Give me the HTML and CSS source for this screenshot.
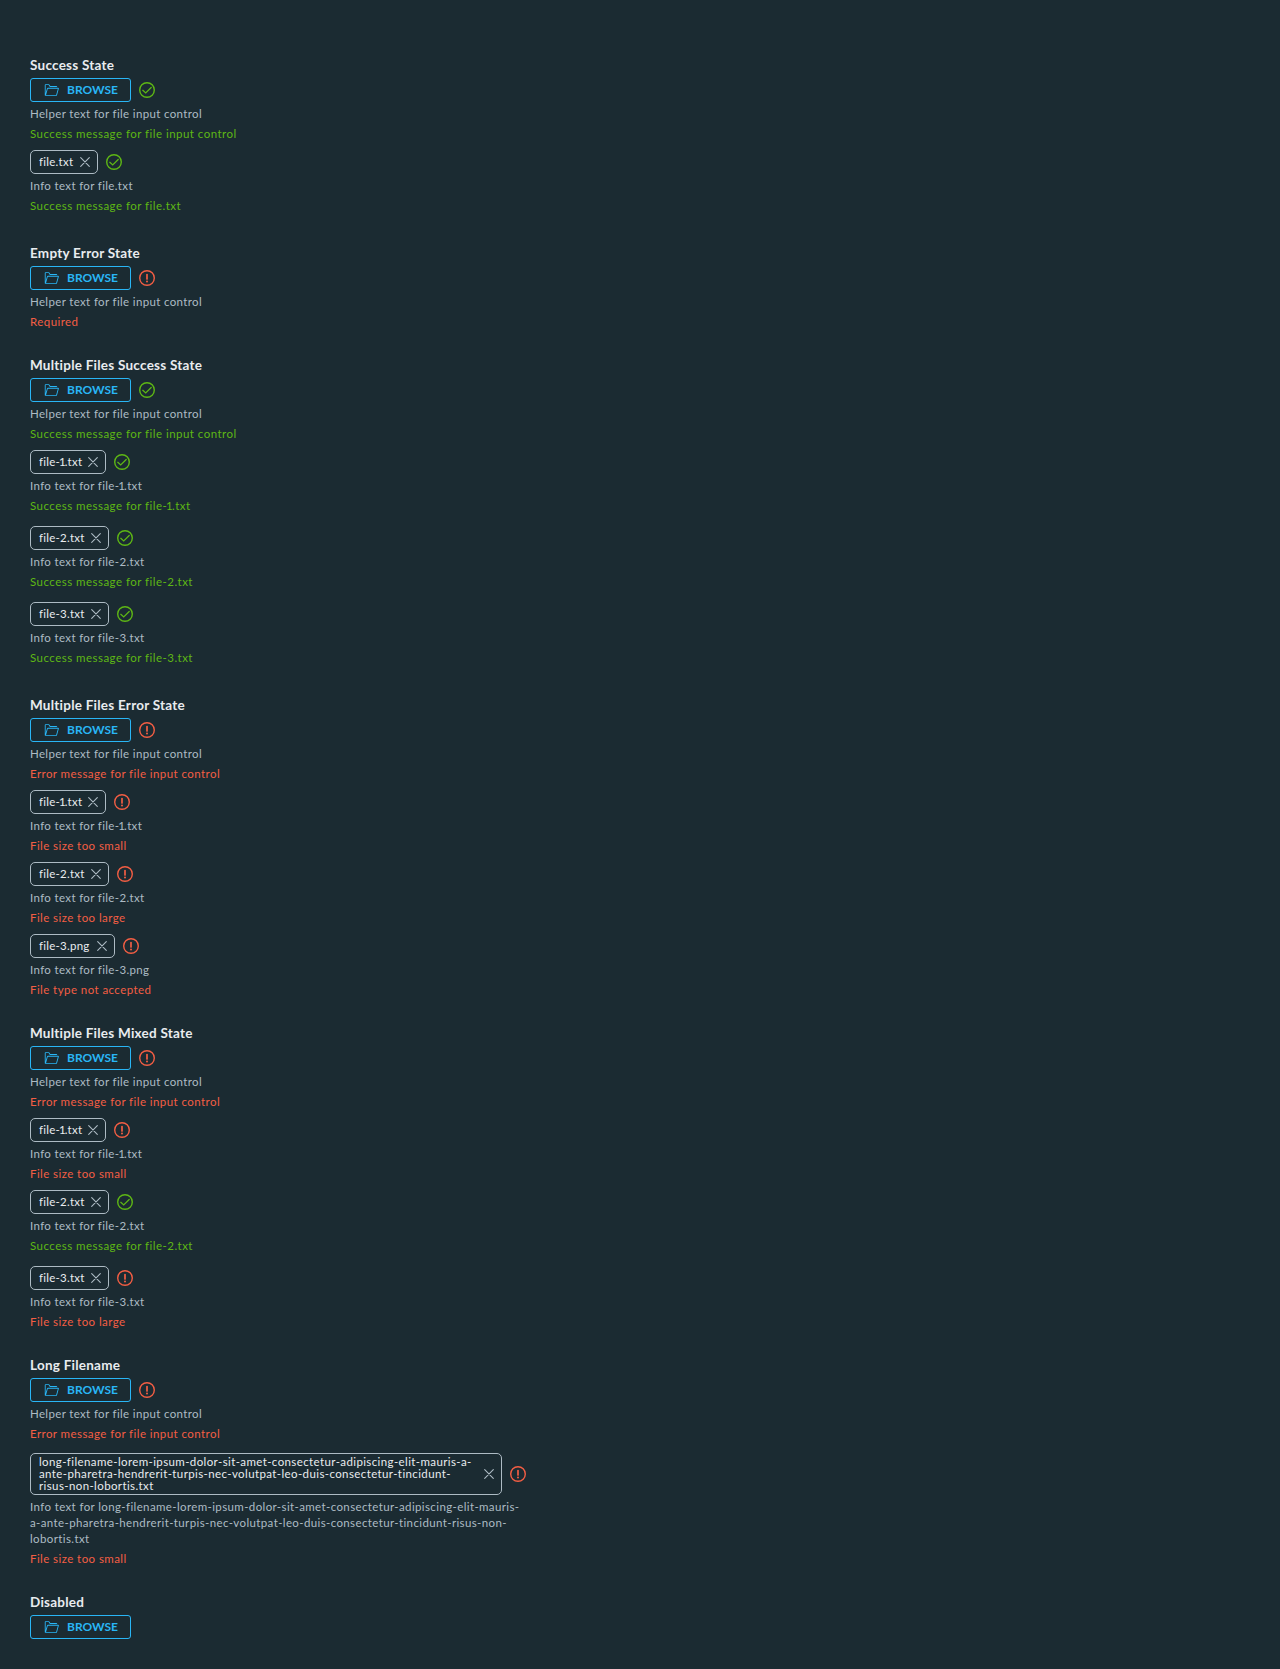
FILE: index.html
```html
<!DOCTYPE html>
<html lang="en">
<head>
<meta charset="utf-8">
<title>File input states</title>
<link rel="stylesheet" href="styles.css">
</head>
<body>
<svg class="sprite" aria-hidden="true">
  <symbol id="folder" viewBox="0 0 36 36"><path d="M35.32,13.74A1.71,1.71,0,0,0,33.87,13H11.17a2.59,2.59,0,0,0-2.25,1.52,1,1,0,0,0,0,.14L6,25V7h6.49l2.61,3.59a1,1,0,0,0,.81.41H32a2,2,0,0,0-2-2H16.42L14.11,5.82A2,2,0,0,0,12.49,5H6A2,2,0,0,0,4,7V29.69A1.37,1.37,0,0,0,5.41,31H30.34a1,1,0,0,0,1-.72l4.19-15.1A1.64,1.64,0,0,0,35.32,13.74ZM29.55,29H6.9l3.88-13.81a.66.66,0,0,1,.38-.24H33.49Z" fill="currentColor"/></symbol>
  <symbol id="success" viewBox="0 0 36 36"><circle cx="18" cy="18" r="14.6" fill="none" stroke="currentColor" stroke-width="2.8"/><path d="M9.6 18.6l5.8 5.4L26.4 13" fill="none" stroke="currentColor" stroke-width="2.5" stroke-linecap="round"/></symbol>
  <symbol id="error" viewBox="0 0 36 36"><circle cx="18" cy="18" r="14.6" fill="none" stroke="currentColor" stroke-width="2.8"/><path d="M18 11.2v8.6" fill="none" stroke="currentColor" stroke-width="3.4" stroke-linecap="round"/><circle cx="18" cy="25" r="2" fill="currentColor"/></symbol>
  <symbol id="close" viewBox="0 0 10 10"><path d="M.7.7l8.6 8.6M9.3.7L.7 9.3" fill="none" stroke="currentColor" stroke-width="1.1" stroke-linecap="round"/></symbol>
</svg>
<main class="page" id="page"></main>
<script src="page.js"></script>
</body>
</html>
```

FILE: styles.css
```css
* { box-sizing: border-box; }
body {
  margin: 0;
  background: #1b2b32;
  color: #e9ecef;
  font-family: Lato, "Liberation Sans", sans-serif;
}
.sprite { display: none; }
.page {
  display: flex;
  flex-direction: column;
  gap: 26px;
  min-height: 1669px;
  padding: 56px 30px 30px;
}
.control { display: flex; flex-direction: column; align-items: flex-start; }
.title {
  height: 20px;
  margin-bottom: 2px;
  font-size: 13.5px;
  font-weight: 700;
  line-height: 19px;
  letter-spacing: 0.24px;
}
.row { display: flex; align-items: center; gap: 7px; }
.browse {
  display: flex;
  align-items: center;
  gap: 8px;
  width: 101px;
  height: 24px;
  padding: 0 12px;
  border: 1px solid #29b6f6;
  border-radius: 3px;
  background: none;
  color: #29b6f6;
  font: 700 12px/16px Lato, "Liberation Sans", sans-serif;
}
.folder { width: 16px; height: 16px; flex: none; }
.status { width: 18px; height: 18px; flex: none; }
.success { color: #5eb715; }
.error { color: #f35e44; }
.text {
  margin-top: 4px;
  font-size: 11.5px;
  line-height: 16px;
  letter-spacing: 0.35px;
  white-space: pre-line;
}
.helper { color: #adbbc4; }
.text.success, .text.error { letter-spacing: 0.47px; }
.text.error { letter-spacing: 0.43px; }
.file { display: flex; flex-direction: column; align-items: flex-start; padding-top: 8px; }
.file.ok { padding-bottom: 4px; }
.chip {
  display: flex;
  align-items: center;
  justify-content: space-between;
  min-height: 24px;
  padding: 0 7px 0 8px;
  border: 1px solid #adbbc4;
  border-radius: 5px;
  font-size: 11.5px;
  line-height: 12px;
  letter-spacing: 0.25px;
  white-space: pre-line;
}
.one { margin: 0 -1.2px; }
.close { width: 10px; height: 10px; flex: none; color: #adbbc4; }
.long { padding-top: 11px; }
.long .chip { height: 42px; letter-spacing: 0.39px; }
.long .helper { letter-spacing: 0.38px; }
```

FILE: page.js
```js
const longName = "long-filename-lorem-ipsum-dolor-sit-amet-consectetur-adipiscing-elit-mauris-a-ante-pharetra-hendrerit-turpis-nec-volutpat-leo-duis-consectetur-tincidunt-risus-non-lobortis.txt";
const control = "for file input control";
const controls = [
  { title: "Success State", state: "success", message: `Success message ${control}`, files: [["file.txt", 68, "success"]] },
  { title: "Empty Error State", state: "error", message: "Required" },
  { title: "Multiple Files Success State", state: "success", message: `Success message ${control}`,
    files: [["file-1.txt", 76, "success"], ["file-2.txt", 79, "success"], ["file-3.txt", 79, "success"]] },
  { title: "Multiple Files Error State", state: "error", message: `Error message ${control}`,
    files: [["file-1.txt", 76, "error", "File size too small"], ["file-2.txt", 79, "error", "File size too large"], ["file-3.png", 85, "error", "File type not accepted"]] },
  { title: "Multiple Files Mixed State", state: "error", message: `Error message ${control}`,
    files: [["file-1.txt", 76, "error", "File size too small"], ["file-2.txt", 79, "success"], ["file-3.txt", 79, "error", "File size too large"]] },
  { title: "Long Filename", state: "error", message: `Error message ${control}`,
    files: [[longName, 472, "error", "File size too small"]] },
  { title: "Disabled" }
];
const icon = (name, cls) => `<svg class="${cls}"><use href="#${name}"/></svg>`;

// Break the long name at the hyphens where each column runs out.
const breakAfter = (text, ...marks) => marks.reduce((t, m) => t.replace(m, m + "\n"), text);
// Tighten the narrow digit between the hyphen and the dot.
const kern = text => text.replace("-1.", '-<span class="one">1</span>.');

function file([name, width, state, message]) {
  const long = name === longName;
  const label = long ? breakAfter(name, "mauris-a-", "tincidunt-") : name;
  const info = long ? breakAfter(name, "mauris-", "risus-non-") : name;
  return `<div class="file${state === "success" ? " ok" : ""}${long ? " long" : ""}">
    <div class="row"><div class="chip" style="width:${width}px"><span>${kern(label)}</span>${icon("close", "close")}</div>${icon(state, "status " + state)}</div>
    <div class="text helper">Info text for ${kern(info)}</div>
    <div class="text ${state}">${message || "Success message for " + kern(name)}</div>
  </div>`;
}
document.getElementById("page").innerHTML = controls.map(c => `<section class="control">
  <div class="title">${c.title}</div>
  <div class="row"><button class="browse">${icon("folder", "folder")}<span>BROWSE</span></button>${c.state ? icon(c.state, "status " + c.state) : ""}</div>
  ${c.state ? `<div class="text helper">Helper text ${control}</div><div class="text ${c.state}">${c.message}</div>` : ""}
  ${(c.files || []).map(file).join("")}
</section>`).join("");
```
